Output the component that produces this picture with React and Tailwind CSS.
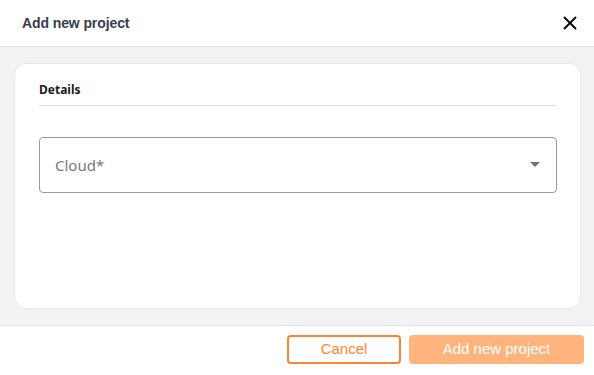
import { X } from 'lucide-react';

export default function App() {
  return (
    <div className="w-[594px] h-[375px] bg-white flex flex-col overflow-hidden">
      {/* Header */}
      <div className="h-[47px] shrink-0 flex items-center justify-between pl-[22px] pr-[13px] border-b border-[#e2e3e5]">
        <h1 className="text-[14px] font-semibold text-[#373d49] font-['Liberation_Sans',sans-serif] tracking-[-0.1px]">
          Add new project
        </h1>
        <X className="w-[22px] h-[22px] text-black" strokeWidth={2} />
      </div>

      {/* Body */}
      <div className="flex-1 bg-[#f1f2f4] pl-[14px] pr-[13px] pt-[16px] pb-[16px] border-b border-[#e2e3e5]">
        <div className="h-full bg-white rounded-[12px] border border-[#e6e7ea] pl-[24px] pr-[23px] pt-[17px]">
          <div className="pb-[6px] border-b border-[#e0e0e0]">
            <h2 className="text-[12px] font-bold text-[#1a1a1a] font-['Noto_Sans',sans-serif]">Details</h2>
          </div>
          <div className="mt-[31px] h-[56px] rounded-[4px] border border-[#9a9a9a] flex items-center justify-between pl-[15px] pr-[16px]">
            <span className="text-[15px] text-[#7a7a7a] font-['Noto_Sans',sans-serif]">Cloud*</span>
            <svg width="10" height="5" viewBox="0 0 10 5" className="mt-[-2px]">
              <path d="M0 0 L10 0 L5 5 Z" fill="#757575" />
            </svg>
          </div>
        </div>
      </div>

      {/* Footer */}
      <div className="h-[49px] shrink-0 flex items-center justify-end gap-[8px] pr-[10px] pb-[2px] font-['Liberation_Sans',sans-serif]">
        <button className="w-[114px] h-[29px] rounded-[4px] border-2 border-[#fb8533] text-[#fb8533] text-[15px] bg-white">
          Cancel
        </button>
        <button className="w-[175px] h-[29px] rounded-[4px] bg-[#feb47c] text-white text-[15px]">
          Add new project
        </button>
      </div>
    </div>
  );
}
